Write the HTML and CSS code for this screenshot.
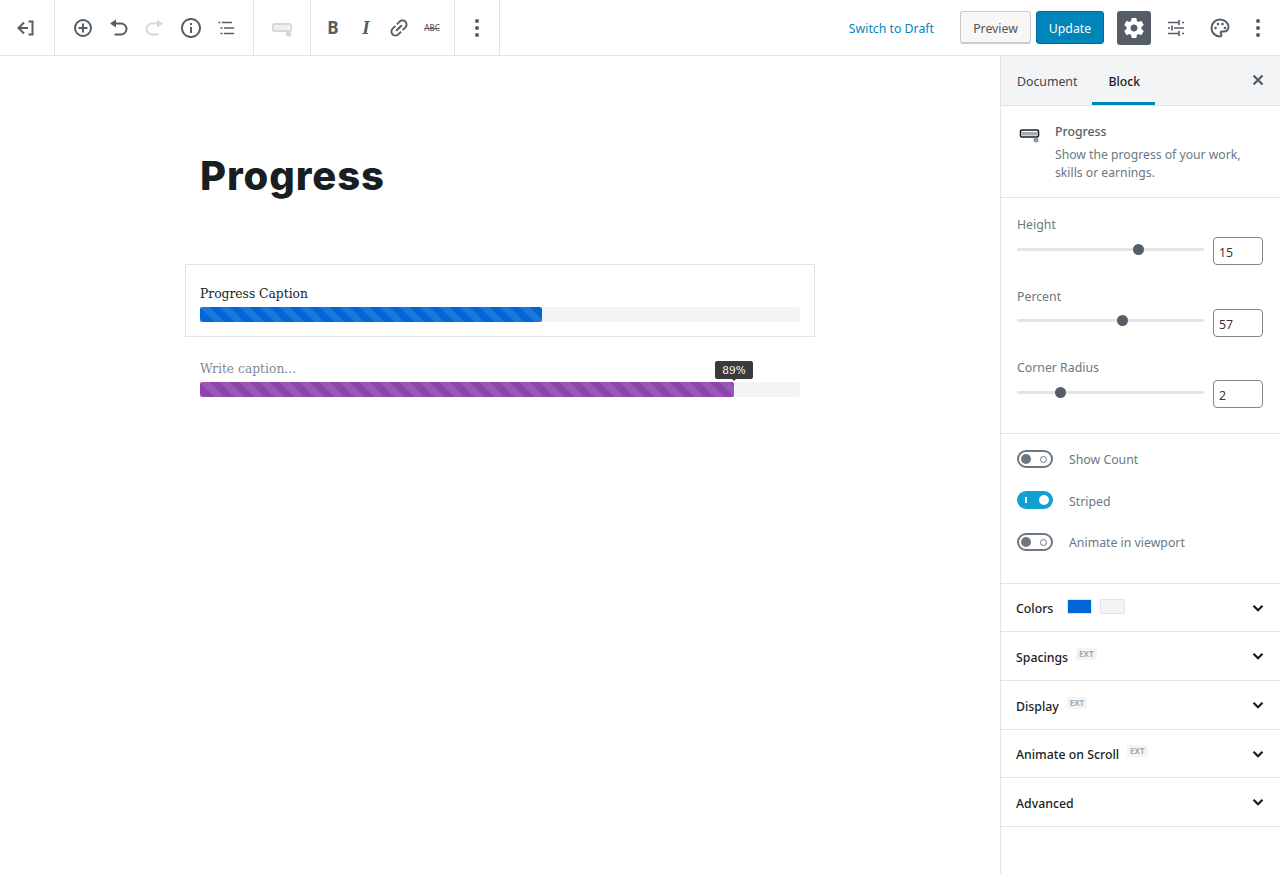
FILE: index.html
```html
<!DOCTYPE html>
<html lang="en">
<head>
    <meta charset="UTF-8">
    <title>Progress</title>
    <link rel="stylesheet" href="styles.css">
</head>
<body>
    <header class="topbar">
        <div class="tools">
            <div class="group group-back">
                <svg class="icon" viewBox="0 0 24 24"><path class="line" d="M11 6.500 5.500 12l5.500 5.500M5.500 12H15M15.500 5.500h4v13h-4"/></svg>
            </div>
            <div class="group group-main">
                <svg class="icon" viewBox="0 0 24 24"><circle class="line" cx="12" cy="12" r="8"/><path class="line" d="M12 7.500v9M7.500 12h9"/></svg>
                <svg class="icon" viewBox="0 0 24 24"><path class="fill" d="M9 3.500v8L3 7.500z"/><path class="line" d="M7.500 7.500H14a5 5 0 0 1 0 11H7.500"/></svg>
                <svg class="icon muted" viewBox="0 0 24 24"><path class="fill" d="M14 3.500v8l6-4z"/><path class="line" d="M15.500 7.500H9a5 5 0 0 0 0 11h6.500"/></svg>
                <svg class="icon" viewBox="0 0 24 24"><path class="fill" d="M11 7h2v2h-2zm0 4h2v6h-2zm1-9C6.480 2 2 6.480 2 12s4.480 10 10 10 10-4.480 10-10S17.520 2 12 2zm0 18c-4.410 0-8-3.590-8-8s3.590-8 8-8 8 3.590 8 8-3.590 8-8 8z"/></svg>
                <svg class="icon" viewBox="0 0 24 24"><path class="thin" d="M3.500 6.500h2M7 6.500h10M5.500 12h2M9 12h10M5.500 17.500h2M9 17.500h10"/></svg>
            </div>
            <div class="group group-block">
                <svg class="icon muted" viewBox="0 0 24 24"><rect class="line" x="3" y="8" width="18" height="7" rx="1.500"/><path class="inner" d="M4 9h15v5H4z"/><circle class="fill" cx="18.500" cy="18" r="2.800"/></svg>
            </div>
            <div class="group group-format">
                <span class="fmt fmt-b">B</span>
                <span class="fmt fmt-i">I</span>
                <svg class="icon" viewBox="0 0 24 24"><path class="link-path" transform="rotate(-45 12 12)" d="M3.900 12c0-1.710 1.390-3.100 3.100-3.100h4V7H7c-2.760 0-5 2.240-5 5s2.240 5 5 5h4v-1.900H7c-1.710 0-3.100-1.390-3.100-3.100zM8 13h8v-2H8v2zm9-6h-4v1.900h4c1.710 0 3.100 1.390 3.100 3.100s-1.390 3.100-3.100 3.100h-4V17h4c2.760 0 5-2.240 5-5s-2.240-5-5-5z"/></svg>
                <span class="fmt fmt-s">ABC</span>
            </div>
            <div class="group group-more">
                <svg class="icon" viewBox="0 0 24 24"><circle class="fill" cx="12" cy="5" r="2"/><circle class="fill" cx="12" cy="12" r="2"/><circle class="fill" cx="12" cy="19" r="2"/></svg>
            </div>
        </div>
        <div class="actions">
            <a class="draft">Switch to Draft</a>
            <button class="btn btn-preview">Preview</button>
            <button class="btn btn-update">Update</button>
            <span class="gear"><svg class="icon" viewBox="0 0 24 24"><path fill="#fff" d="M19.430 12.980c.04-.32.07-.64.07-.98s-.03-.66-.07-.98l2.110-1.650c.19-.15.24-.42.12-.64l-2-3.460c-.12-.22-.39-.3-.61-.22l-2.490 1c-.52-.4-1.080-.73-1.690-.98l-.38-2.650C14.460 2.180 14.250 2 14 2h-4c-.25 0-.46.18-.49.42l-.38 2.650c-.61.25-1.170.59-1.690.98l-2.490-1c-.23-.09-.49 0-.61.22l-2 3.460c-.13.22-.07.49.12.64l2.110 1.650c-.04.32-.07.65-.07.98s.03.66.07.98l-2.110 1.650c-.19.15-.24.42-.12.64l2 3.460c.12.22.39.3.61.22l2.490-1c.52.4 1.080.73 1.690.98l.38 2.650c.03.24.24.42.49.42h4c.25 0 .46-.18.49-.42l.38-2.650c.61-.25 1.170-.59 1.690-.98l2.490 1c.23.09.49 0 .61-.22l2-3.460c.12-.22.07-.49-.12-.64l-2.110-1.650zM12 15.500c-1.930 0-3.500-1.570-3.500-3.500s1.570-3.500 3.500-3.500 3.500 1.570 3.500 3.500-1.570 3.500-3.500 3.500z"/></svg></span>
            <svg class="icon icon-sliders" viewBox="0 0 24 24"><path class="thin" d="M4 6.500h10M18 6.500h2M15 4v5M4 12h2M10 12h10M8 9.500v5M4 17.500h10M18 17.500h2M15 15v5"/></svg>
            <svg class="icon icon-palette" viewBox="0 0 24 24"><path class="line" d="M12 3.500c-4.800 0-8.500 3.700-8.500 8.500s3.700 8.500 8.500 8.500c1 0 1.500-.7 1.500-1.400 0-1-.9-1.300-.9-2.200 0-.8.6-1.400 1.500-1.400H16c2.600 0 4.500-1.900 4.500-4.400 0-4.100-3.800-7.600-8.500-7.600z"/><circle class="fill" cx="7.500" cy="12" r="1.300"/><circle class="fill" cx="10" cy="8" r="1.300"/><circle class="fill" cx="14.500" cy="8" r="1.300"/><circle class="fill" cx="17" cy="12" r="1.300"/></svg>
            <svg class="icon icon-more" viewBox="0 0 24 24"><circle class="fill" cx="12" cy="5" r="2"/><circle class="fill" cx="12" cy="12" r="2"/><circle class="fill" cx="12" cy="19" r="2"/></svg>
        </div>
    </header>

    <div class="layout">
        <main class="editor">
            <h1 class="title">Progress</h1>
            <div class="block block-selected">
                <div class="caption">Progress Caption</div>
                <div class="track"><div class="bar bar-blue"></div></div>
            </div>
            <div class="block">
                <div class="caption caption-empty">Write caption...</div>
                <div class="track">
                    <div class="bar bar-purple"><span class="count">89%</span></div>
                </div>
            </div>
        </main>

        <aside class="sidebar">
            <div class="tabs">
                <span class="tab">Document</span>
                <span class="tab tab-active">Block</span>
                <svg class="close" viewBox="0 0 24 24"><path d="M6 6l12 12M18 6 6 18"/></svg>
            </div>

            <section class="card">
                <svg class="card-icon" viewBox="0 0 24 24"><rect x="3.500" y="8" width="18" height="7" rx="1.500" fill="none" stroke="#191e23" stroke-width="1.600"/><path fill="#a2aab2" d="M5 10h15v3.500H5z"/><circle cx="19" cy="18" r="2.500" fill="#8f98a1"/></svg>
                <div>
                    <div class="card-title">Progress</div>
                    <p class="card-text">Show the progress of your work, skills or earnings.</p>
                </div>
            </section>

            <section class="ranges">
                <div class="range">
                    <label class="range-label">Height</label>
                    <div class="range-row">
                        <div class="slider"><span class="thumb thumb-height"></span></div>
                        <div class="number">15</div>
                    </div>
                </div>
                <div class="range">
                    <label class="range-label">Percent</label>
                    <div class="range-row">
                        <div class="slider"><span class="thumb thumb-percent"></span></div>
                        <div class="number">57</div>
                    </div>
                </div>
                <div class="range">
                    <label class="range-label">Corner Radius</label>
                    <div class="range-row">
                        <div class="slider"><span class="thumb thumb-radius"></span></div>
                        <div class="number">2</div>
                    </div>
                </div>
            </section>

            <section class="toggles">
                <div class="toggle-row"><span class="toggle"></span><span class="toggle-label">Show Count</span></div>
                <div class="toggle-row"><span class="toggle toggle-on"></span><span class="toggle-label">Striped</span></div>
                <div class="toggle-row"><span class="toggle"></span><span class="toggle-label">Animate in viewport</span></div>
            </section>

            <section class="panel panel-short">
                <span class="panel-name">Colors</span>
                <span class="swatch swatch-blue"></span>
                <span class="swatch swatch-grey"></span>
                <svg class="chevron" viewBox="0 0 24 24"><path d="M6 9l6 6 6-6"/></svg>
            </section>
            <section class="panel">
                <span class="panel-name">Spacings</span><span class="ext">EXT</span>
                <svg class="chevron" viewBox="0 0 24 24"><path d="M6 9l6 6 6-6"/></svg>
            </section>
            <section class="panel">
                <span class="panel-name">Display</span><span class="ext">EXT</span>
                <svg class="chevron" viewBox="0 0 24 24"><path d="M6 9l6 6 6-6"/></svg>
            </section>
            <section class="panel panel-short">
                <span class="panel-name">Animate on Scroll</span><span class="ext">EXT</span>
                <svg class="chevron" viewBox="0 0 24 24"><path d="M6 9l6 6 6-6"/></svg>
            </section>
            <section class="panel">
                <span class="panel-name">Advanced</span>
                <svg class="chevron" viewBox="0 0 24 24"><path d="M6 9l6 6 6-6"/></svg>
            </section>
        </aside>
    </div>
</body>
</html>
```

FILE: styles.css
```css
*{
    margin: 0;
    padding: 0;
    box-sizing: border-box;
}

body{
    background-color: #fff;
    color: #191e23;
    font-family: "Noto Sans", sans-serif;
    font-size: 12.3px;
    height: 100vh;
    overflow: hidden;
}

/* top toolbar */

.topbar{
    display: flex;
    justify-content: space-between;
    height: 56px;
    border-bottom: 1px solid #e2e4e7;
}

.tools{
    display: flex;
}

.group{
    display: flex;
    align-items: center;
    justify-content: center;
    border-right: 1px solid #e2e4e7;
}

.group-back{
    width: 55px;
    padding-right: 5px;
}

.group-main{
    width: 199px;
    gap: 12px;
    padding-left: 2px;
}

.group-block{
    width: 57px;
}

.group-format{
    width: 144px;
    gap: 9px;
}

.group-more{
    width: 45px;
}

.icon{
    width: 24px;
    height: 24px;
    flex: none;
}

.line{
    fill: none;
    stroke: #555d66;
    stroke-width: 2;
}

.thin{
    fill: none;
    stroke: #555d66;
    stroke-width: 1.700;
}

.fill,
.link-path{
    fill: #555d66;
}

.muted .line{
    stroke: #d5d8db;
}

.muted .fill{
    fill: #d5d8db;
}

.inner{
    fill: #eceef0;
}

.fmt{
    width: 24px;
    flex: none;
    text-align: center;
    color: #555d66;
}

.fmt-b{
    font-size: 17px;
    font-weight: 700;
}

.fmt-i{
    font-family: "Liberation Serif", serif;
    font-size: 19px;
    font-style: italic;
    font-weight: 700;
}

.fmt-s{
    font-size: 8px;
    font-weight: 500;
    text-decoration: line-through;
}

.actions{
    display: flex;
    align-items: center;
    padding-right: 10px;
}

.draft{
    color: #0085ba;
    margin-right: 26px;
    padding-top: 1px;
}

.btn{
    height: 33px;
    border-radius: 3px;
    font-family: inherit;
    font-size: 12.3px;
    border: 1px solid;
}

.btn-preview{
    width: 71px;
    margin-right: 5px;
    padding-top: 2px;
    background-color: #f7f7f7;
    border-color: #ccc;
    border-bottom-width: 2px;
    color: #555;
}

.btn-update{
    width: 68px;
    margin-right: 13px;
    padding-top: 1px;
    background-color: #0085ba;
    border-color: #006799;
    color: #fff;
}

.gear{
    display: flex;
    align-items: center;
    justify-content: center;
    width: 34px;
    height: 34px;
    border-radius: 3px;
    background-color: #555d66;
}

.icon-sliders{
    margin-left: 13px;
}

.icon-palette{
    margin-left: 20px;
}

.icon-more{
    margin-left: 14px;
}

/* main area */

.layout{
    display: flex;
    height: calc(100vh - 56px);
}

.editor{
    flex: 1;
    padding-top: 92px;
}

.title{
    width: 600px;
    margin: 0 auto 60px;
    font-family: Inter, sans-serif;
    font-size: 40px;
    font-weight: 800;
    letter-spacing: 0.9px;
    line-height: 56px;
    color: #191e23;
}

.block{
    width: 630px;
    margin: 0 auto 2px;
    padding: 19px 14px 14px;
    border: 1px solid transparent;
}

.block-selected{
    border-color: #e2e4e7;
}

.caption{
    font-family: "DejaVu Serif", serif;
    font-size: 12.3px;
    line-height: 20px;
    margin-bottom: 3px;
    color: #191e23;
}

.caption-empty{
    color: #7e8993;
}

.track{
    height: 15px;
    background-color: #f3f4f5;
    border-radius: 2px;
}

.bar{
    position: relative;
    height: 100%;
    border-radius: 2px;
    background-image: linear-gradient(45deg, rgba(255,255,255,.1) 25%, transparent 25%, transparent 50%, rgba(255,255,255,.1) 50%, rgba(255,255,255,.1) 75%, transparent 75%);
    background-size: 20px 20px;
}

.bar-blue{
    width: 57%;
    background-color: #0366d6;
}

.bar-purple{
    width: 89%;
    background-color: #8e44ad;
}

.count{
    position: absolute;
    right: -19px;
    top: -21px;
    width: 38px;
    height: 18px;
    border-radius: 2px;
    background-color: #3a3a3a;
    color: #fff;
    font-family: "DejaVu Serif", serif;
    font-size: 10.5px;
    line-height: 18px;
    text-align: center;
}

.count::after{
    content: "";
    position: absolute;
    left: 17px;
    bottom: -2px;
    border: 2px solid transparent;
    border-top-color: #3a3a3a;
    border-bottom: 0;
}

/* sidebar */

.sidebar{
    width: 280px;
    flex: none;
    border-left: 1px solid #e2e4e7;
}

.tabs{
    position: relative;
    display: flex;
    height: 50px;
    padding-left: 16px;
    background-color: #f3f4f5;
    border-bottom: 1px solid #e2e4e7;
}

.tab{
    line-height: 52px;
    color: #40464d;
    margin-right: 31px;
}

.tab-active{
    font-weight: 500;
    color: #191e23;
    box-shadow: 0 3px 0 #0085ba;
    height: 46px;
    padding: 0 15px 0 16px;
    margin-left: -16px;
}

.close{
    position: absolute;
    right: 13px;
    top: 15px;
    width: 18px;
    height: 18px;
    fill: none;
    stroke: #555d66;
    stroke-width: 3;
}

.card{
    display: flex;
    gap: 14px;
    height: 92px;
    padding: 16px;
    border-bottom: 1px solid #e2e4e7;
}

.card-icon{
    width: 24px;
    height: 24px;
    flex: none;
}

.card-title{
    font-weight: 500;
    color: #555d66;
    line-height: 20px;
    margin-bottom: 4px;
}

.card-text{
    font-size: 12.2px;
    line-height: 18px;
    color: #6c7781;
}

.ranges{
    height: 236px;
    padding: 15px 16px 0;
    border-bottom: 1px solid #e2e4e7;
}

.range{
    height: 71.500px;
}

.range-label{
    display: block;
    padding-top: 2px;
    line-height: 20px;
    color: #6c7781;
}

.range-row{
    display: flex;
    align-items: center;
    gap: 9px;
    margin-top: 2px;
}

.slider{
    position: relative;
    width: 187px;
    height: 3px;
    margin-top: -4px;
    border-radius: 2px;
    background-color: #e2e4e7;
}

.thumb{
    position: absolute;
    top: -4px;
    width: 11px;
    height: 11px;
    border-radius: 50%;
    background-color: #555d66;
}

.thumb-height{
    left: 116px;
}

.thumb-percent{
    left: 100px;
}

.thumb-radius{
    left: 38px;
}

.number{
    width: 50px;
    height: 28px;
    padding-left: 5px;
    line-height: 29px;
    border: 1px solid #7e8993;
    border-radius: 4px;
    color: #32373c;
}

.toggles{
    height: 150px;
    padding-top: 4px;
    border-bottom: 1px solid #e2e4e7;
}

.toggle-row{
    display: flex;
    align-items: center;
    height: 41.500px;
    padding-left: 16px;
    gap: 16px;
    color: #6c7781;
}

.toggle-label{
    padding-top: 2px;
}

.toggle{
    position: relative;
    width: 36px;
    height: 18px;
    border: 2px solid #6c7781;
    border-radius: 9px;
}

.toggle::before{
    content: "";
    position: absolute;
    left: 2px;
    top: 2px;
    width: 10px;
    height: 10px;
    border-radius: 50%;
    background-color: #6c7781;
}

.toggle::after{
    content: "";
    position: absolute;
    right: 4px;
    top: 4.500px;
    width: 5px;
    height: 5px;
    border-radius: 50%;
    border: 1.500px solid #6c7781;
}

.toggle-on{
    background-color: #11a0d2;
    border-color: #11a0d2;
}

.toggle-on::before{
    left: auto;
    right: 2px;
    background-color: #fff;
}

.toggle-on::after{
    left: 6px;
    right: auto;
    top: 4px;
    width: 2px;
    height: 6px;
    border: 0;
    border-radius: 0;
    background-color: #fff;
}

.panel{
    display: flex;
    align-items: center;
    height: 49px;
    padding: 0 13px 0 15px;
    border-bottom: 1px solid #e2e4e7;
}

.panel-short{
    height: 48px;
}

.panel-name{
    padding-top: 2px;
    color: #191e23;
    font-weight: 500;
}

.swatch{
    width: 25px;
    height: 15px;
    margin-left: 14px;
    margin-bottom: 2px;
    border: 1px solid #e2e4e7;
}

.swatch-blue{
    background-color: #0366d6;
}

.swatch-grey{
    margin-left: 8px;
    background-color: #f3f4f5;
}

.ext{
    margin: 0 0 5px 8px;
    padding: 0 3px;
    font-size: 8px;
    font-weight: 700;
    line-height: 12px;
    color: #a2aab2;
    background-color: #f3f4f5;
    border-radius: 2px;
}

.chevron{
    width: 18px;
    height: 18px;
    margin-left: auto;
    fill: none;
    stroke: #191e23;
    stroke-width: 3;
}
```
